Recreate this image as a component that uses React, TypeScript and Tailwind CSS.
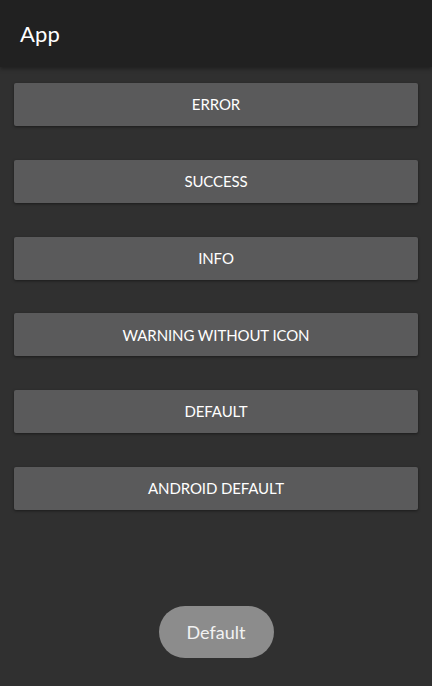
import React from "react";

const labels = ["ERROR", "SUCCESS", "INFO", "WARNING WITHOUT ICON", "DEFAULT", "ANDROID DEFAULT"];

export default function App() {
  return (
    <div
      className="w-[432px] h-[686px] bg-[#303030] flex flex-col overflow-hidden"
      style={{ fontFamily: "Lato, 'Noto Sans', sans-serif" }}
    >
      <div className="h-[67px] bg-[#212121] flex items-center pl-[20px] shadow-[0_2px_4px_rgba(0,0,0,0.35)] relative z-10">
        <span className="text-[22px] text-white tracking-[0.2px]">App</span>
      </div>
      <div className="flex flex-col gap-[33.8px] px-[14px] pt-[16px]">
        {labels.map((l) => (
          <div
            key={l}
            className="h-[43px] bg-[#5a5a5b] rounded-[2px] flex items-center justify-center text-white text-[15px] tracking-[-0.1px] shadow-[0_1px_3px_rgba(0,0,0,0.45)]"
          >
            {l}
          </div>
        ))}
      </div>
      <div className="flex-1" />
      <div className="flex justify-center pb-[28px]">
        <div className="w-[115px] h-[52px] rounded-full bg-[#8c8c8c] flex items-center justify-center text-[#f2f2f2] text-[18px]">
          Default
        </div>
      </div>
    </div>
  );
}
